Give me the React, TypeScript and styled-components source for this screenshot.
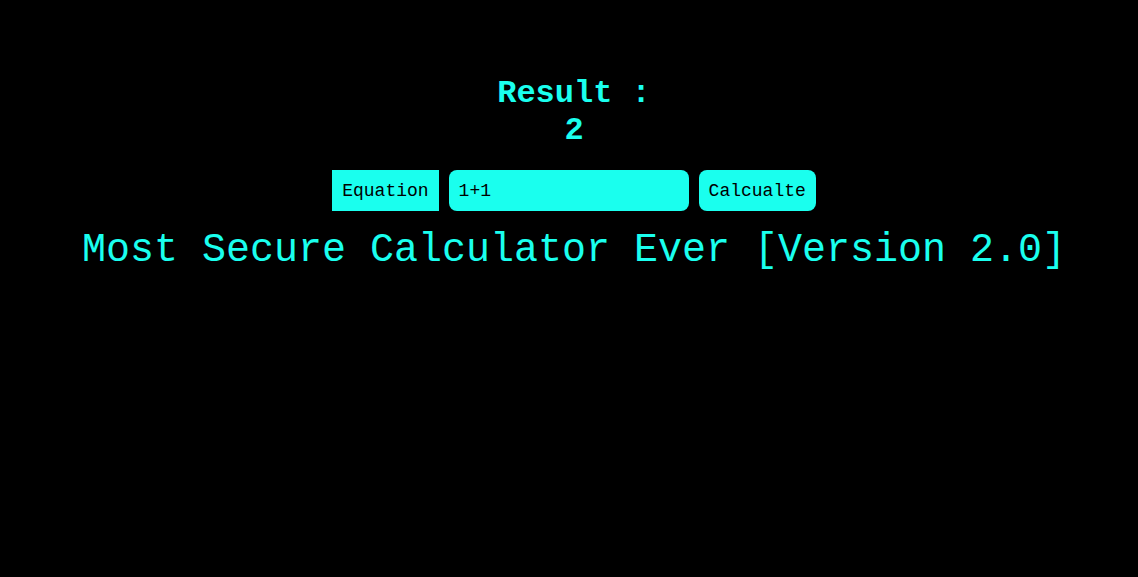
import React from "react";
import styled, { createGlobalStyle } from "styled-components";

const Global = createGlobalStyle`
  html, body { margin: 0; padding: 0; background: #000; }
  body { font-family: "Liberation Mono", "Courier New", monospace; min-height: 577px; }
`;

const CYAN = "#1affee";

const Page = styled.main`
  display: flex;
  flex-direction: column;
  align-items: center;
  padding: 76px 0 0 10px;
  min-height: 577px;
  box-sizing: border-box;
  background: #000;
`;

const Result = styled.h1`
  margin: 0;
  font-family: "Liberation Mono", "Courier New", monospace;
  font-size: 32px;
  font-weight: bold;
  color: ${CYAN};
  text-align: center;
  line-height: 36.5px;
`;

const Row = styled.form`
  display: flex;
  align-items: stretch;
  gap: 10px;
  margin-top: 21px;
  height: 41px;
`;

const Label = styled.label`
  display: flex;
  align-items: center;
  padding: 0 10px;
  background: ${CYAN};
  color: #000;
  font-family: "Liberation Mono", "Courier New", monospace;
  font-size: 18px;
`;

const Input = styled.input`
  width: 240px;
  box-sizing: border-box;
  border: none;
  outline: none;
  border-radius: 8px;
  padding: 0 10px;
  background: ${CYAN};
  color: #000;
  font-family: "Liberation Mono", "Courier New", monospace;
  font-size: 18px;
`;

const Button = styled.button`
  border: none;
  border-radius: 8px;
  padding: 0 10px;
  background: ${CYAN};
  color: #000;
  font-family: "Liberation Mono", "Courier New", monospace;
  font-size: 18px;
  cursor: pointer;
`;

const Title = styled.h2`
  margin: 17px 0 0;
  font-family: "Liberation Mono", "Courier New", monospace;
  font-size: 40px;
  font-weight: normal;
  color: ${CYAN};
  text-align: center;
  white-space: nowrap;
`;

export default function App() {
  return (
    <>
      <Global />
      <Page>
        <Result>
          Result :<br />2
        </Result>
        <Row onSubmit={(e) => e.preventDefault()}>
          <Label htmlFor="eq">Equation</Label>
          <Input id="eq" defaultValue="1+1" />
          <Button type="submit">Calcualte</Button>
        </Row>
        <Title>Most Secure Calculator Ever [Version 2.0]</Title>
      </Page>
    </>
  );
}
